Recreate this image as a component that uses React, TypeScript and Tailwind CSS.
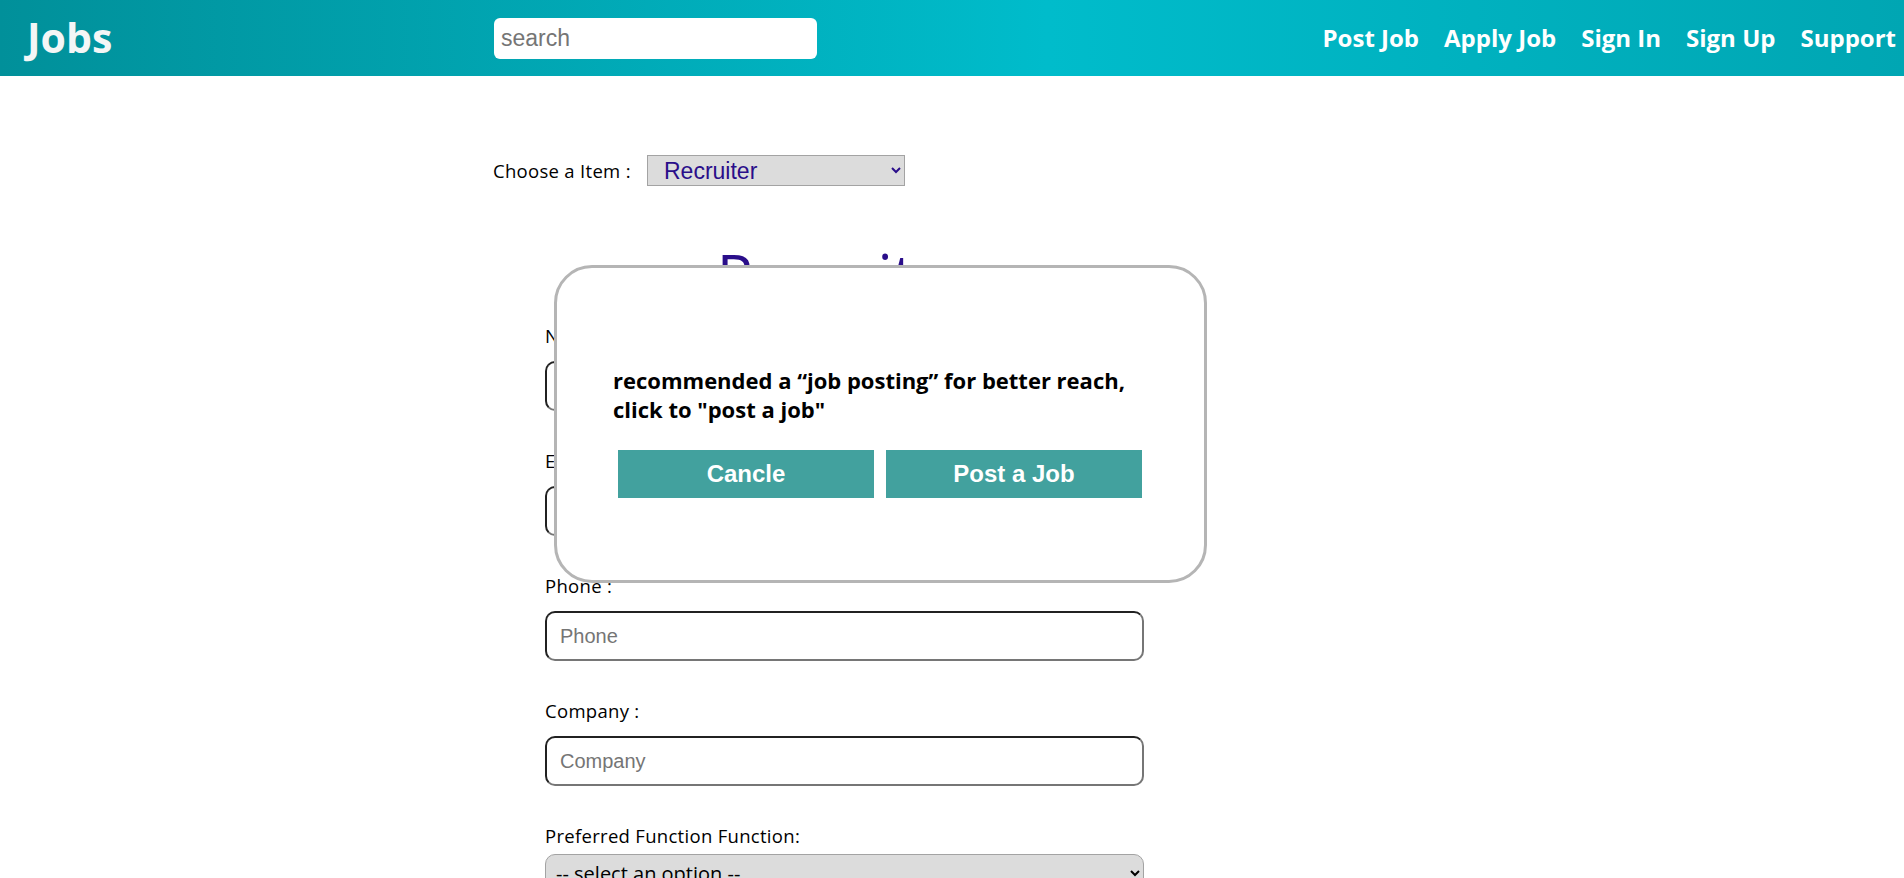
import React from "react";

const UB = "font-['Open_Sans','Noto_Sans',sans-serif]";
const AR = "font-['Liberation_Sans',Arial,sans-serif]";

const NAV = ["Post Job", "Apply Job", "Sign In", "Sign Up", "Support"];

const FIELDS = [
  { label: "Name :", ph: "Name" },
  { label: "Email :", ph: "Email" },
  { label: "Phone :", ph: "Phone" },
  { label: "Company :", ph: "Company" },
];

function Header() {
  return (
    <header className="h-[76px] flex items-center bg-gradient-to-r from-[#01909a] via-[#00bccb] via-55% to-[#00a6b3]">
      <div className={`w-[494px] pl-[27px] text-[41px] font-bold text-[#f4f6f6] ${UB}`}>Jobs</div>
      <input
        placeholder="search"
        className={`w-[323px] h-[41px] bg-white rounded-[6px] pl-[7px] text-[23px] text-black placeholder:text-[#757575] outline-none ${AR}`}
      />
      <nav className={`ml-auto pr-[8px] flex gap-[25px] text-[24px] font-bold text-white ${UB}`}>
        {NAV.map((n) => (
          <a key={n} href="#" className="whitespace-nowrap">
            {n}
          </a>
        ))}
      </nav>
    </header>
  );
}

export default function App() {
  return (
    <div className={`min-h-screen bg-white text-black ${UB}`}>
      <Header />

      <main className="relative pt-[79px] pb-20">
        {/* 选择角色 */}
        <div className="ml-[493px] flex items-center">
          <span className="w-[154px] text-[18.5px] tracking-[0.3px] whitespace-nowrap">Choose a Item :</span>
          <select
            defaultValue="Recruiter"
            className={`w-[258px] h-[31px] bg-[#dcdcdc] border border-[#a3a3a3] pl-[12px] text-[23px] text-[#2a0e8a] ${AR}`}
          >
            <option>Recruiter</option>
            <option>Job Seeker</option>
          </select>
        </div>

        {/* 表单 */}
        <form className="ml-[545px] w-[599px] mt-[53px]">
          <h1 className="text-center text-[60px] leading-[72px] text-[#2a0e8a] mb-[15px]">Recruiter</h1>

          {FIELDS.map((f) => (
            <div key={f.label} className="mb-[40px]">
              <label className="block text-[18.5px] tracking-[0.3px] leading-[20px]">{f.label}</label>
              <input
                placeholder={f.ph}
                className={`mt-[15px] w-full h-[50px] rounded-[10px] border-2 [border-style:inset] border-[#767676] pl-[13px] text-[20px] placeholder:text-[#757575] outline-none ${AR}`}
              />
            </div>
          ))}

          <label className="block text-[18.5px] tracking-[0.3px] leading-[20px]">Preferred Function Function:</label>
          <select className="mt-[8px] w-full h-[38px] rounded-[10px] bg-[#dcdcdc] border border-[#a3a3a3] pl-[6px] text-[20px]">
            <option>-- select an option --</option>
            <option>Engineering</option>
            <option>Sales</option>
          </select>
        </form>

        {/* 提示弹窗 */}
        <div className="absolute left-[554px] top-[189px] w-[653px] h-[318px] bg-white border-[3px] border-[#b5b5b5] rounded-[38px] pt-[98px] pl-[56px]">
          <p className="text-[22px] leading-[29px] font-bold text-black">
            recommended a “job posting” for better reach,
            <br />
            click to "post a job"
          </p>
          <div className="mt-[26px] ml-[5px] flex gap-[12px]">
            <button type="button" className={`w-[256px] h-[48px] bg-[#42a19e] text-white text-[24px] font-bold ${AR}`}>
              Cancle
            </button>
            <button type="button" className={`w-[256px] h-[48px] bg-[#42a19e] text-white text-[24px] font-bold ${AR}`}>
              Post a Job
            </button>
          </div>
        </div>
      </main>
    </div>
  );
}
